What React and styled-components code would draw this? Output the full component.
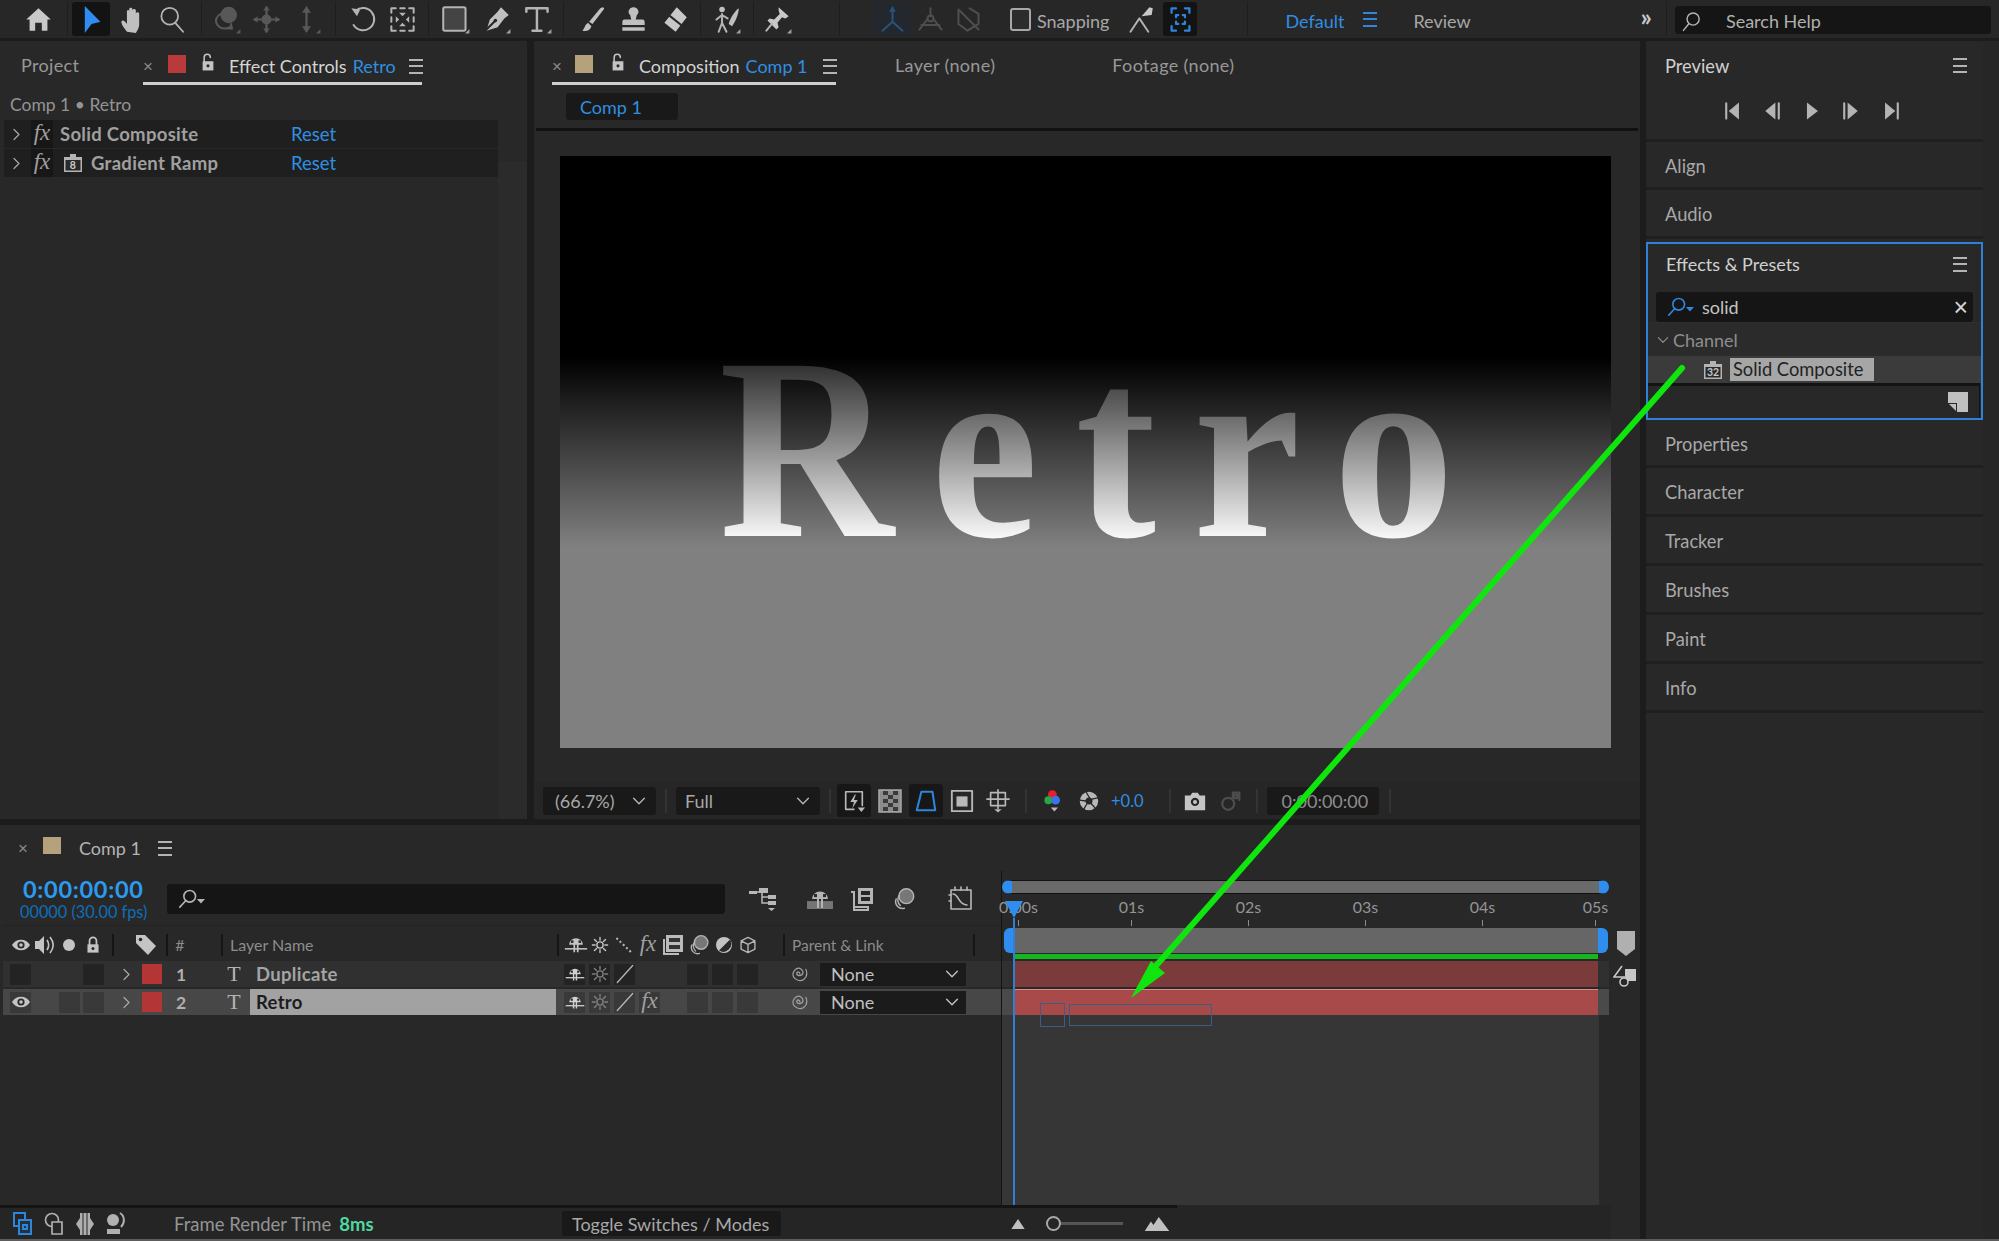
import React from 'react';
import styled, { createGlobalStyle } from 'styled-components';

const Global = createGlobalStyle`
  html, body { margin: 0; padding: 0; background: #1c1c1c; }
  body { font-family: Lato, "Open Sans", sans-serif; font-size: 18px; color: #a8a8a8; overflow: hidden; }
`;

const Page = styled.div`
  position: relative; width: 1999px; height: 1241px; overflow: hidden; box-sizing: border-box;
  display: flex; flex-direction: column; background: #1c1c1c; border-bottom: 2px solid #5c5c5c;
`;

/* ---------- icon helper ---------- */
const Ico = ({ size = 26, color = '#b4b4b4', sw = 1.8, children, vb = '0 0 26 26' }) => (
  <svg width={size} height={size} viewBox={vb} fill="none" stroke={color} strokeWidth={sw} strokeLinecap="round" strokeLinejoin="round">
    {children}
  </svg>
);
const Corner = ({ c = '#a0a0a0' }) => <path d="M25.500 21.500v4h-4z" fill={c} stroke="none" />;

const I = {
  home: <Ico><path d="M2 13 13 3l11 10h-3v10h-5v-7h-6v7H5V13z" fill="#c8c8c8" stroke="none" /></Ico>,
  select: <Ico color="#2f8df0"><path d="M7 1l14 14-8 2-6 8z" fill="#2f8df0" stroke="none" /></Ico>,
  hand: <Ico><path d="M8 24c-2-3-5-6-5-9 1-2 3-1 5 2V6c0-2 2-2 2 0v6-8c0-2 3-2 3 0v8-7c0-2 3-2 3 0v8-5c0-2 3-2 3 0v8c0 5-1 6-3 9z" fill="#c0c0c0" stroke="none" /></Ico>,
  zoom: <Ico sw={1.6}><circle cx="10.500" cy="10" r="7.500" /><path d="M15.500 16l7 8" /></Ico>,
  orbit: <Ico color="#585858"><circle cx="15" cy="9" r="6.500" fill="#585858" /><path d="M8 8c-4 2-6 6-3 10s9 4 12 1" /><path d="M17 17l1 4-4 0" /><Corner c="#585858" /></Ico>,
  pan: <Ico color="#585858" sw={2}><path d="M13 2v22M2 13h22" /><path d="M13 1l-3 4h6zM13 25l-3-4h6zM1 13l4-3v6zM25 13l-4-3v6z" fill="#585858" stroke="none" /><circle cx="13" cy="13" r="3.500" fill="#585858" /></Ico>,
  dolly: <Ico color="#585858" sw={2}><path d="M13 3v20" /><path d="M13 1l-4 6h8zM13 25l-4-6h8z" fill="#585858" stroke="none" /><Corner c="#585858" /></Ico>,
  rotate: <Ico sw={1.8}><path d="M7 5a10 10 0 1 1-2 13" /><path d="M3 3l5 7 3-6z" fill="#b4b4b4" stroke="none" /></Ico>,
  anchor: <Ico sw={1.800}><path d="M3 7V3h4M19 3h4v4M3 19v4h4M23 19v4h-4" /><path d="M11 3h4M11 23h4M3 11v4M23 11v4" /><path d="M10 7h6l-3 3zM10 19h6l-3-3zM7 10v6l3-3zM19 10v6l-3-3z" fill="#b4b4b4" stroke="none" /></Ico>,
  rect: <Ico sw={1.800}><rect x="2" y="2" width="20" height="21" rx="1.500" fill="#444" /><Corner /></Ico>,
  pen: <Ico sw={1.800}><path d="M17 2l7 7-4 3-6 8-10 3 3-10 7-7z" fill="#c0c0c0" stroke="none" /><path d="M4 22l7-7" stroke="#272727" /><circle cx="12" cy="14" r="1.600" fill="#272727" stroke="none" /><Corner /></Ico>,
  type: <Ico sw={2.200}><path d="M3 6V3h19v3M12.500 3v20M8.500 23h8" /><Corner /></Ico>,
  brush: <Ico><path d="M22 2c1 0 2 1 1 2L13 17l-3-2L20 3zM9 16l3 3c-1 4-5 5-8 4 2-2 2-5 5-7z" fill="#c0c0c0" stroke="none" /></Ico>,
  stamp: <Ico><path d="M13 2a4 4 0 0 1 3 7l-1 4h6a2 2 0 0 1 2 2v3H3v-3a2 2 0 0 1 2-2h6l-1-4a4 4 0 0 1 3-7zM3 20h20v3H3z" fill="#c0c0c0" stroke="none" /></Ico>,
  eraser: <Ico><path d="M15 2l9 9-10 13-10-8z" fill="#c8c8c8" stroke="none" /><path d="M9 10l10 8" stroke="#272727" /></Ico>,
  roto: <Ico><circle cx="9" cy="4" r="2.500" fill="#c0c0c0" stroke="none" /><path d="M9 8v8l-3 8M9 16l4 8M4 13l5-4 5 3" /><path d="M24 3c-3 2-8 9-9 14l3 2c3-4 6-11 6-16z" fill="#c0c0c0" stroke="none" /><Corner /></Ico>,
  pin: <Ico><path d="M14 2l9 8-3 2-3-1-4 5 1 4-2 2-8-8 2-2 4 1 5-5-1-3z" fill="#c8c8c8" stroke="none" /><path d="M8 17l-5 6" /><Corner /></Ico>,
  axisA: <Ico color="#28537c"><path d="M13 3v12M13 15l-9 8M13 15l9 8" /><path d="M13 1l-3 5h6z" fill="#28537c" stroke="none" /></Ico>,
  axisB: <Ico color="#4e4e4e"><path d="M13 3v7M10 13l-7 9M16 13l7 9M5 18h16" /><circle cx="13" cy="12" r="2.600" /></Ico>,
  axisC: <Ico color="#4e4e4e"><path d="M4 4l18 18M4 4v13l8 6 10-6V8L14 3" /></Ico>,
  snap: <Ico sw={1.700}><path d="M4 24l8-12 8 12" /><path d="M14 10l7-8 3 1-1 6z" fill="#c8c8c8" stroke="none" /></Ico>,
  snapBox: <Ico color="#2d86dc" sw={2}><path d="M5 7V3h4M17 3h4v4M5 19v4h4M21 19v4h-4M11 9H9v2M15 9h2v2M11 17H9v-2M15 17h2v-2" /></Ico>,
  search: (c = '#b4b4b4', s = 22) => (
    <Ico size={s} color={c} sw={1.800}>
      <circle cx="15" cy="10" r="7.500" /><path d="M9.500 16L3 24" />
    </Ico>
  ),
  searchCaret: (c = '#b4b4b4') => (
    <svg width="27" height="20" viewBox="0 0 30 22" fill="none" stroke={c} strokeWidth="1.800" strokeLinecap="round">
      <circle cx="13" cy="8" r="6.500" /><path d="M8.500 13L2 20" />
      <path d="M21 11h9l-4.500 5z" fill={c} stroke="none" />
    </svg>
  ),
  first: <Ico size={22}><path d="M5 4v18" strokeWidth="2.500" /><path d="M20 3v20L8 13z" fill="#b4b4b4" stroke="none" /></Ico>,
  prev: <Ico size={22}><path d="M21 4v18" strokeWidth="2.500" /><path d="M17 3v20L5 13z" fill="#b4b4b4" stroke="none" /></Ico>,
  play: <Ico size={22}><path d="M7 3v20l13-10z" fill="#b4b4b4" stroke="none" /></Ico>,
  next: <Ico size={22}><path d="M5 4v18" strokeWidth="2.500" /><path d="M9 3v20l12-10z" fill="#b4b4b4" stroke="none" /></Ico>,
  last: <Ico size={22}><path d="M21 4v18" strokeWidth="2.500" /><path d="M6 3v20l12-10z" fill="#b4b4b4" stroke="none" /></Ico>,
  lock: (s = 22) => <Ico size={s} color="#c4c4c4" sw={2}><path d="M8 12V7a4 4 0 0 1 8 0" /><path d="M6 12h14v12H6z" fill="#c4c4c4" stroke="none" /><circle cx="13" cy="18" r="2" fill="#272727" stroke="none" /></Ico>,
  lockShut: <Ico size={18} color="#c4c4c4" sw={2.600}><path d="M8 12V7a5 5 0 0 1 10 0v5" /><path d="M5 12h16v12H5z" fill="#c4c4c4" stroke="none" /><circle cx="13" cy="18" r="2.200" fill="#272727" stroke="none" /></Ico>,
  bolt: <Ico color="#b8b8b8" sw={1.800}><path d="M22 18V3H4v19h9" /><path d="M14 6l-5 8h4l-2 7 6-9h-4l2-6z" fill="#b8b8b8" stroke="none" /><path d="M17 20h8l-4 5z" fill="#b8b8b8" stroke="none" /></Ico>,
  checker: <svg width="24" height="24" viewBox="0 0 24 24"><rect x="1" y="1" width="22" height="22" fill="#8c8c8c" stroke="#a8a8a8" strokeWidth="1.500" /><path d="M5 2h5v4H5zM15 2h5v4h-5zM10 6h5v4h-5zM5 10h5v4H5zM15 10h5v4h-5zM10 14h5v4h-5zM5 18h5v4H5zM15 18h5v4h-5z" fill="#3a3a3a" /></svg>,
  region: <Ico color="#2d86dc" sw={2.200}><path d="M8 3h12l3 20H3z" /></Ico>,
  mask: <Ico color="#b8b8b8" sw={2}><rect x="2" y="2" width="22" height="22" /><rect x="7" y="8" width="12" height="11" fill="#b8b8b8" stroke="none" /></Ico>,
  grid: <Ico color="#b8b8b8" sw={1.800}><path d="M5 4h16v14H5zM13 1v20M1 11h24" /><path d="M9 22h8l-4 3.500z" fill="#b8b8b8" stroke="none" /></Ico>,
  rgb: (
    <svg width="26" height="30" viewBox="0 0 26 30">
      <circle cx="13" cy="7" r="5.500" fill="#e8202a" /><circle cx="8" cy="14" r="5" fill="#27a845" /><circle cx="17" cy="14" r="5.500" fill="#3b74e8" />
      <path d="M11 23h9l-4.500 5z" fill="#b8b8b8" />
    </svg>
  ),
  shutter: (
    <Ico color="#b8b8b8" sw={2.400}>
      <circle cx="13" cy="13" r="10" fill="#b8b8b8" stroke="none" />
      <circle cx="13" cy="13" r="3.800" fill="#272727" stroke="none" />
      <path d="M10 3.500l3.500 6M22.500 9.500l-6.500 1.500M20 21l-4.500-5M7.500 21.500l3-5M3 12l6.500 1" stroke="#272727" strokeWidth="1.400" />
    </Ico>
  ),
  camera: <Ico color="#c4c4c4"><path d="M2 7h6l2-3h6l2 3h6v16H2z" fill="#c4c4c4" stroke="none" /><circle cx="13" cy="14" r="4.500" fill="#272727" stroke="none" /><circle cx="13" cy="14" r="2.200" fill="#c4c4c4" stroke="none" /></Ico>,
  snapshot: <Ico color="#4e4e4e" sw={2.400}><circle cx="10" cy="16" r="6.500" /><path d="M15 4h7v8M15 4v5" /><circle cx="18" cy="8" r="2" /></Ico>,
  tree: <svg width="30" height="26" viewBox="0 0 30 26" fill="#b8b8b8"><path d="M1 5h8v3H1zM11 2h9v5h-9zM20 9h8v4h-8zM20 15h8v4h-8z" /><path d="M8 6h8M14 6v11h7M14 11h7" stroke="#b8b8b8" strokeWidth="1.500" fill="none" /><path d="M20 22h7l-3.500 3z" /></svg>,
  shy: (c = '#c0c0c0', w = 28, base = true) => (
    <svg width={w} height={w * 0.72} viewBox="0 0 28 20" fill={c}>
      <path d="M6 10a8 7.500 0 0 1 16 0z" /><path d="M11 9h2v10h-2zM15 9h2v10h-2z" />
      <rect x="8" y="5" width="3" height="3" fill="#2a2a2a" /><rect x="17" y="5" width="3" height="3" fill="#2a2a2a" />
      {base ? <rect x="1" y="14" width="26" height="1.800" /> : <rect x="1" y="12" width="26" height="8" opacity=".55" />}
    </svg>
  ),
  frames: <svg width="24" height="24" viewBox="0 0 24 24" fill="#b4b4b4"><path d="M8 1h15v16H8z" /><path d="M1 5h3v18h14v-3H4" fill="none" stroke="#b4b4b4" strokeWidth="2" /><path d="M11 4h9v4h-9zM11 10h9v4h-9z" fill="#272727" /></svg>,
  blur: (s = 24) => <Ico size={s} color="#b4b4b4" sw={1.600}><circle cx="15.500" cy="10" r="8" fill="#777" /><path d="M8 9a8 8 0 0 0 1 11M4.500 13a7.500 7.500 0 0 0 9 10" /></Ico>,
  graph: <Ico color="#b8b8b8" sw={1.600}><rect x="3" y="4" width="20" height="19" /><path d="M5 8c6 0 5 11 14 11" /><path d="M7 1v3M13 1v3M19 1v3M1 9h2M1 15h2" /></Ico>,
  eye: (c = '#c4c4c4') => <svg width="20" height="14" viewBox="0 0 20 14"><path d="M1 7c4-7 14-7 18 0-4 7-14 7-18 0z" fill={c} /><circle cx="10" cy="7" r="3.600" fill="#2a2a2a" /><circle cx="10" cy="7" r="1.800" fill={c} /></svg>,
  speaker: <svg width="22" height="20" viewBox="0 0 22 20" fill="#c4c4c4"><path d="M1 6h4l5-5v18l-5-5H1z" /><path d="M13 5c2 3 2 7 0 10M16 2c4 5 4 11 0 16" fill="none" stroke="#c4c4c4" strokeWidth="1.600" /></svg>,
  tag: <svg width="22" height="22" viewBox="0 0 22 22"><path d="M1 1h9l11 11-8 9L1 9z" fill="#c4c4c4" /><circle cx="5.500" cy="5.500" r="1.800" fill="#272727" /></svg>,
  dot: <svg width="12" height="12" viewBox="0 0 12 12"><circle cx="6" cy="6" r="6" fill="#c4c4c4" /></svg>,
  sun: (c = '#c4c4c4') => <Ico size={18} color={c} sw={2}><circle cx="13" cy="13" r="4.500" /><path d="M13 2v4M13 20v4M2 13h4M20 13h4M5 5l3 3M18 18l3 3M21 5l-3 3M8 18l-3 3" /></Ico>,
  dots: <Ico size={18} sw={3}><path d="M2 3l22 21" strokeDasharray="3 3.500" strokeLinecap="butt" /></Ico>,
  slash: <Ico size={20} color="#b4b4b4" sw={1.800}><path d="M3 24L23 2" /></Ico>,
  film: <svg width="20" height="20" viewBox="0 0 20 20" fill="#bbb"><rect x="3" y="0" width="17" height="17" /><path d="M0 4h2v14h14v2H0z" /><rect x="6" y="3" width="11" height="4" fill="#333" /><rect x="6" y="10" width="11" height="4" fill="#333" /></svg>,
  adj: <svg width="18" height="18" viewBox="0 0 18 18"><circle cx="9" cy="9" r="8" fill="#c4c4c4" /><path d="M15 3.500a8 8 0 0 1-11 11z" fill="#2a2a2a" /></svg>,
  cube: <Ico size={18} sw={2}><path d="M13 2l10 5v12l-10 5-10-5V7zM3 7l10 5 10-5M13 12v12" /></Ico>,
  spiral: <Ico size={20} color="#a0a0a0" sw={1.600}><path d="M14 13a2 2 0 1 0-4-1c0 4 7 4 8 0s-4-8-8-6-6 7-4 11 9 6 13 3 5-8 3-13" /></Ico>,
  chevD: (c = '#b4b4b4', s = 14) => <Ico size={s} color={c} sw={2.600}><path d="M3 8l10 10L23 8" /></Ico>,
  chevR: (c = '#a8a8a8') => <Ico size={13} color={c} sw={2.400}><path d="M8 3l10 10L8 23" /></Ico>,
  badge: (label, w = 20) => (
    <svg width={w} height={w} viewBox="0 0 20 20" fontFamily="Lato, sans-serif">
      <path d="M1 4h6V1h6v3h6v15H1z" fill="#b4b4b4" />
      <rect x="2.500" y="7" width="15" height="10.500" fill="#2a2a2a" />
      <text x="10" y="16" textAnchor="middle" fontSize="10.500" fontWeight="700" fill="#c8c8c8">{label}</text>
    </svg>
  ),
  newPreset: <svg width="20" height="20" viewBox="0 0 20 20"><path d="M0 0h20v20H9v-9H0z" fill="#c0c0c0" /><path d="M1 12h7v7z" fill="#c0c0c0" /></svg>,
  comps: <svg width="20" height="24" viewBox="0 0 20 24" fill="none" stroke="#2d86dc" strokeWidth="2"><rect x="1" y="1" width="11" height="13" /><rect x="6" y="8" width="12" height="14" fill="#26303a" /><rect x="10" y="13" width="4" height="4" /></svg>,
  stack: <svg width="20" height="24" viewBox="0 0 20 24" fill="none" stroke="#b0b0b0" strokeWidth="1.700"><circle cx="8" cy="8" r="6.500" /><path d="M8 10h10v12H8z" fill="#272727" /></svg>,
  hourglass: <svg width="18" height="24" viewBox="0 0 18 24" fill="#b0b0b0"><path d="M4 1h10v5l4 6-4 6v5H4v-5l-4-6 4-6z" /><path d="M7 1v22M11 1v22" stroke="#272727" strokeWidth="1" /></svg>,
  user: <svg width="24" height="24" viewBox="0 0 24 24" fill="#b0b0b0"><circle cx="9" cy="8" r="6" /><path d="M3 17h13v5H3z" /><path d="M16 1c5 3 5 10 1 14" stroke="#b0b0b0" fill="none" strokeWidth="2" /></svg>,
  mountS: <svg width="14" height="10" viewBox="0 0 16 12" fill="#c0c0c0"><path d="M0 12l8-12 8 12z" /></svg>,
  mountL: <svg width="28" height="14" viewBox="0 0 28 16" fill="#c0c0c0"><path d="M0 16L7 5l3 4L16 0l12 16z" /></svg>,
  marker: <svg width="18" height="26" viewBox="0 0 18 26"><path d="M0 0h18v18l-9 7-9-7z" fill="#b0b0b0" /></svg>,
  compMark: <svg width="24" height="22" viewBox="0 0 24 22" fill="none" stroke="#c8c8c8" strokeWidth="1.600"><path d="M9 1L1 12h12" /><circle cx="11" cy="17" r="4" /><path d="M12 4h11v12h-8l-3-5z" fill="#c8c8c8" stroke="none" /></svg>,
};

/* ---------- top bar ---------- */
const TopBar = styled.header`
  height: 38px; flex: none; background: #272727; display: flex; align-items: stretch; padding-left: 18px;
`;
const Tool = styled.div`
  width: ${p => p.$w || 40}px; margin-left: ${p => p.$ml || 0}px; flex: none;
  display: flex; align-items: center; justify-content: center;
  background: ${p => p.$bg || 'transparent'};
  border-radius: 3px; margin-top: ${p => (p.$bg ? 2 : 0)}px; margin-bottom: ${p => (p.$bg ? 2 : 0)}px;
  svg { width: 29px; height: 29px; }
`;
const VSep = styled.div`
  width: 1px; flex: none; margin-left: ${p => p.$ml || 0}px; background: #1e1e1e; margin-top: 2px; margin-bottom: 2px;
`;
const CheckBox = styled.div`
  width: 17px; height: 19px; flex: none; border: 2px solid #a8a8a8; border-radius: 3px; margin: auto 0 auto ${p => p.$ml}px; background: #2c2c2c;
`;
const BarText = styled.span`
  align-self: center; margin-left: ${p => p.$ml || 0}px; flex: none; padding-top: 3px;
  color: ${p => p.$c || '#a8a8a8'}; font-size: 18px;
`;
const Burger = styled.div`
  flex: none; align-self: center; width: ${p => p.$w || 14}px; height: 11px; margin-left: ${p => p.$ml || 0}px;
  border-top: 2px solid ${p => p.$c || '#b4b4b4'}; border-bottom: 2px solid ${p => p.$c || '#b4b4b4'};
  position: relative;
  &::after { content: ''; position: absolute; left: 0; right: 0; top: 4.500px; height: 2px; background: ${p => p.$c || '#b4b4b4'}; }
`;
const Chevrons = styled.span`
  align-self: center; margin-left: ${p => p.$ml}px; color: #c8c8c8; font-size: 25px; font-weight: 700; line-height: 1; margin-top: -6px;
`;
const HelpBox = styled.div`
  flex: none; width: 316px; margin: 6px 0 4px 8px; padding-top: 2px; box-sizing: border-box; background: #151515; border-radius: 3px;
  display: flex; align-items: center; padding-left: 6px; gap: 24px; color: #b0b0b0; font-size: 18px;
`;

/* ---------- main ---------- */
const Main = styled.div`
  flex: 1; display: flex; min-height: 0; padding-top: 3px; gap: 6px; background: #1c1c1c;
`;
const LeftStack = styled.div`
  width: 1640px; flex: none; display: flex; flex-direction: column; gap: 6px; min-height: 0;
`;
const UpperRow = styled.div`
  height: 778px; flex: none; display: flex; gap: 7px;
`;
const Panel = styled.section`
  background: #282828; display: flex; flex-direction: column; min-width: 0;
`;
const EffectPanel = styled(Panel)`
  width: 527px; flex: none; position: relative;
`;
const CompPanel = styled(Panel)`
  flex: 1;
`;
const Tabs = styled.div`
  height: 44px; flex: none; display: flex; align-items: stretch; padding-left: ${p => p.$pl || 0}px;
`;
const Tab = styled.div`
  display: flex; align-items: center; height: 44px; box-sizing: border-box; margin-left: ${p => p.$ml || 0}px;
  width: ${p => (p.$w ? `${p.$w}px` : 'auto')}; white-space: nowrap;
  border-bottom: 3px solid ${p => (p.$on ? '#cfcfcf' : 'transparent')};
  color: ${p => (p.$on ? '#d4d4d4' : '#989898')}; font-size: 18px; padding-top: ${p => (p.$on ? 9 : 6)}px;
  letter-spacing: ${p => (p.$on ? 0 : 0.35)}px;
  span { flex: none; }
`;
const Close = styled.span`
  color: #8a8a8a; font-size: 17px; line-height: 1; margin-left: ${p => p.$ml || 0}px; margin-right: ${p => p.$mr || 0}px; font-family: "Liberation Sans", sans-serif;
`;
const Swatch = styled.span`
  width: ${p => p.$s || 18}px; height: ${p => p.$h || 18}px; flex: none; background: ${p => p.$c};
  margin-left: ${p => p.$ml || 0}px; margin-right: ${p => p.$mr || 0}px; margin-bottom: ${p => p.$mb || 0}px;
`;
const Blue = styled.span`
  color: #2f8fe0; margin-left: ${p => p.$ml ?? 6}px;
`;
const LockWrap = styled.span`
  display: inline-flex; margin: 0 ${p => p.$mr || 11}px 8px ${p => p.$ml || 12}px;
`;
const Crumb = styled.div`
  height: 35px; flex: none; box-sizing: border-box; padding: 4px 0 0 10px; display: flex; align-items: center; color: #949494; font-size: 17.500px;
`;
const FxRow = styled.div`
  width: 494px; height: 28px; margin: 0 0 1px 4px; background: #1f1f1f; display: flex; align-items: center; color: #a0a0a0; font-size: 18.500px; font-weight: 700; letter-spacing: .3px; flex: none;
`;
const FxMark = styled.span`
  font-family: "Liberation Serif", serif; font-style: italic; font-weight: 400; font-size: 23px; color: #a0a0a0; letter-spacing: 0;
  width: 22px; background: ${p => (p.$bare ? 'none' : '#171717')}; text-align: center; height: 28px; line-height: 26px; flex: none;
  margin-left: ${p => p.$ml || 0}px; margin-right: ${p => (p.$bare ? 0 : 7)}px;
`;
const ResetLink = styled.span`
  position: absolute; left: ${p => p.$x}px; color: #2f8fe0; font-weight: 400; letter-spacing: 0;
`;
const RowChev = styled.span`
  margin-left: ${p => p.$ml || 6}px; display: inline-flex; flex: none;
`;
const RampName = styled.span`
  margin-left: 8px;
`;
const ScrollCol = styled.div`
  position: absolute; right: 0; top: 120px; bottom: 0; width: 29px; background: #2b2b2b;
`;

const ChipRow = styled.div`
  height: 43px; flex: none; border-bottom: 3px solid #111; margin: 0 2px; display: flex; align-items: center; padding-left: 30px;
`;
const Chip = styled.div`
  width: ${p => p.$w}px; height: ${p => p.$h || 27}px; box-sizing: border-box; background: #191919; border-radius: 3px; flex: none;
  display: flex; align-items: center; padding: 0 ${p => p.$pr ?? 10}px 0 ${p => p.$pl ?? 14}px; justify-content: space-between;
  margin-left: ${p => p.$ml || 0}px; color: ${p => p.$c || '#a8a8a8'}; font-size: 18px; white-space: nowrap;
`;
const Viewer = styled.div`
  flex: 1; min-height: 0; display: flex; padding: 25px 29px 34px 26px; box-sizing: border-box;
`;
const Canvas = styled.div`
  flex: 1; background: linear-gradient(180deg, #000 0, #000 34%, #808080 66%, #808080 100%);
  display: flex; justify-content: center; padding-top: 142px; box-sizing: border-box; overflow: hidden;
`;
const RetroText = styled.div`
  font-family: "Liberation Serif", serif; font-weight: 700; font-size: 260px; line-height: 300px; height: 300px;
  letter-spacing: 40px; margin-left: 40px; flex: none;
  background: linear-gradient(180deg, transparent 0, transparent 20%, #2c2c2c 21%, #f8f8f8 80%, #fff 100%);
  -webkit-background-clip: text; background-clip: text; color: transparent; transform: scaleX(.93);
`;
const ViewerFoot = styled.div`
  height: 37px; flex: none; display: flex; align-items: center; background: #262626; padding-left: 9px;
`;
const FootSep = styled.div`
  width: 2px; height: 24px; flex: none; background: #333; margin-left: ${p => p.$ml || 0}px;
`;
const FootIcon = styled.div`
  width: ${p => p.$w || 34}px; height: 33px; flex: none; display: flex; align-items: center; justify-content: center;
  margin-left: ${p => p.$ml || 0}px; border-radius: 3px; background: ${p => (p.$on ? '#171717' : 'transparent')};
  svg { height: 24px; width: auto; }
`;
const ExposureValue = styled.span`
  color: #2f8fe0; font-size: 16.500px; margin-left: 5px; flex: none;
`;

/* ---------- timeline ---------- */
const Timeline = styled(Panel)`
  flex: 1; min-height: 0;
`;
const TlTabs = styled.div`
  height: 46px; flex: none; display: flex; align-items: center; padding-left: 18px; color: #b4b4b4; font-size: 18px;
`;
const TlName = styled.span`
  margin-left: 18px;
`;
const TlBody = styled.div`
  flex: 1; min-height: 0; display: flex;
`;
const TlLeft = styled.div`
  width: 1001px; flex: none; display: flex; flex-direction: column;
`;
const TimeRow = styled.div`
  height: 54px; flex: none; display: flex; padding-left: 20px;
`;
const TimeCol = styled.div`
  width: 147px; flex: none; display: flex; flex-direction: column; padding-top: 5px;
`;
const TimeCode = styled.div`
  color: #2b9bf0; font-size: 23.500px; font-weight: 700; line-height: 27px; letter-spacing: .7px; margin-left: 3px;
`;
const TimeSub = styled.div`
  color: #0f6fb8; font-size: 16.300px; line-height: 18px; white-space: nowrap;
`;
const LayerSearch = styled.div`
  width: 558px; height: 30px; margin-top: 13px; background: #151515; border-radius: 3px; display: flex; align-items: center; padding-left: 11px; flex: none; box-sizing: border-box;
`;
const TlTool = styled.div`
  width: 40px; margin-left: ${p => p.$ml || 0}px; height: 30px; margin-top: 13px; display: flex; align-items: center; justify-content: center; flex: none;
`;
const HeadRow = styled.div`
  height: 35px; flex: none; display: flex; align-items: center; margin-left: 3px; padding-top: 3px; border-top: 1px solid #222; box-sizing: border-box; color: #8c8c8c; font-size: 16px;
`;
const HeadTitle = styled.span`
  margin-left: 7px; width: ${p => p.$w}px; flex: none; font-size: ${p => p.$fs || 16}px;
`;
const Cell = styled.div`
  width: ${p => p.$w || 24}px; flex: none; margin-left: ${p => p.$ml || 0}px; display: flex; align-items: center; justify-content: center;
`;
const HeadSep = styled.div`
  width: 2px; height: 22px; flex: none; background: #151515; margin-left: ${p => p.$ml || 0}px;
`;
const LayerRow = styled.div`
  height: 26px; margin: ${p => (p.$sel ? '2px' : '1px')} 0 0 3px; display: flex; align-items: center; flex: none;
  background: ${p => (p.$sel ? '#474747' : '#303030')}; color: #b0b0b0; font-size: 18px;
`;
const SwitchBox = styled.div`
  width: 21px; height: 21px; flex: none; margin-left: ${p => p.$ml ?? 4}px; display: flex; align-items: center; justify-content: center;
  background: ${p => (p.$sel ? '#393939' : '#232323')};
`;
const Gap = styled.span`
  width: ${p => p.$w}px; flex: none;
`;
const Label = styled.span`
  width: 20px; height: 20px; flex: none; background: #b33535; margin-left: ${p => p.$ml}px;
`;
const Num = styled.span`
  width: 22px; flex: none; margin-left: ${p => p.$ml}px; font-weight: 700; font-size: 17.500px; text-align: center;
`;
const TypeT = styled.span`
  font-family: "Liberation Serif", serif; font-size: 22px; font-weight: 400; color: #b4b4b4; width: 18px; flex: none; margin-left: ${p => p.$ml}px; text-align: center;
`;
const NameCell = styled.div`
  height: 26px; flex: none; width: ${p => p.$w}px; margin-left: ${p => p.$ml}px; padding-left: 6px; box-sizing: border-box; display: flex; align-items: center; font-weight: 700; font-size: 18.500px; letter-spacing: .3px;
  background: ${p => (p.$sel ? '#a2a2a2' : 'transparent')}; color: ${p => (p.$sel ? '#1c1c1c' : '#a4a4a4')};
`;
const NoneSel = styled.div`
  width: 146px; height: 23px; flex: none; margin-left: 9px; background: #1b1b1b; display: flex; align-items: center; justify-content: space-between; padding: 0 7px 0 11px; box-sizing: border-box; color: #c0c0c0;
`;
const TlRight = styled.div`
  flex: 1; min-width: 0; display: flex; flex-direction: column; position: relative; border-left: 1px solid #141414;
`;
const NavStrip = styled.div`
  height: 14px; margin: 9px 31px 0 0; background: #6a6a6a; border-top: 1px solid #111; border-bottom: 1px solid #111; box-sizing: border-box; border-radius: 7px; flex: none; position: relative;
  border-left: 10px solid #2f8df0; border-right: 10px solid #2f8df0;
`;
const Ruler = styled.div`
  height: 34px; flex: none; margin-right: 31px; padding: 4px 0 0 0; box-sizing: border-box; position: relative; display: flex; color: #949494; font-size: 16px;
`;
const RulerMark = styled.div`
  width: 117px; flex: none; text-align: center; display: flex; flex-direction: column; align-items: center; line-height: 18px;
  margin-left: ${p => p.$ml || 0}px;
  &::after { content: ''; width: 1px; height: 6px; background: #8c8c8c; margin-top: 4px; }
`;
const WorkBar = styled.div`
  height: 25px; flex: none; margin: 0 32px 0 2px; background: #666; border-left: 10px solid #2f8df0; border-right: 10px solid #2f8df0; border-radius: 6px; box-sizing: border-box;
`;
const GreenLine = styled.div`
  height: 5px; flex: none; margin: 1px 42px 0 12px; background: #12b81e;
`;
const TrackRow = styled.div`
  height: 26px; margin-top: 2px; flex: none; width: 607px; box-sizing: border-box; padding: 0 11px 0 12px;
  background: ${p => (p.$sel ? '#4a4a4a' : '#303030')}; display: flex;
`;
const TrackBar = styled.div`
  flex: 1; background: ${p => (p.$sel ? '#a94a4a' : '#7b3b3b')}; border-top: ${p => (p.$sel ? '1px solid #d68b8b' : 'none')};
`;
const GraphFill = styled.div`
  flex: 1; width: 597px; background: #363636; min-height: 0;
`;
const GhostBox = styled.div`
  position: absolute; top: ${p => p.$y}px; left: ${p => p.$x}px; width: ${p => p.$w}px; height: ${p => p.$h}px; border: 1.500px solid #3d5e80; box-sizing: border-box;
`;
const Playhead = styled.div`
  position: absolute; left: 2px; top: 30px; bottom: 0; width: 20px; display: flex; flex-direction: column; align-items: center; pointer-events: none;
  &::before { content: ''; width: 0; height: 0; border-left: 9px solid transparent; border-right: 9px solid transparent; border-top: 17px solid #2f8df0; }
  &::after { content: ''; flex: 1; width: 1.500px; background: #2f7fd6; }
`;
const SideMark = styled.div`
  position: absolute; left: ${p => p.$x}px; top: ${p => p.$y}px; display: flex;
`;
const StatusBar = styled.footer`
  height: 34px; flex: none; width: 1611px; box-sizing: border-box; background: #252525; display: flex; align-items: center; position: relative; padding-top: 3px;
  color: #949494; font-size: 18.500px;
  &::before { content: ''; position: absolute; left: 0; top: 0; width: 1177px; height: 3px; background: #141414; }
`;
const StatusIcon = styled.div`
  width: 31px; flex: none; display: flex; justify-content: center; margin-left: ${p => p.$ml || 0}px;
`;
const RenderInfo = styled.div`
  width: 388px; margin-left: 43px; flex: none; white-space: nowrap;
`;
const SlideTrack = styled.div`
  width: 62px; height: 3px; flex: none; background: #555;
`;
const Knob = styled.span`
  width: 11px; height: 11px; flex: none; border: 2.500px solid #a8a8a8; border-radius: 50%; margin-left: 13px;
`;
const Teal = styled.span`
  color: #50d8a0; font-weight: 700; margin-left: 8px;
`;

/* ---------- right column ---------- */
const RightCol = styled.aside`
  width: 337px; flex: none; display: flex; flex-direction: column; background: #282828;
`;
const RightEdge = styled.div`
  flex: 1; margin-left: -6px; background: #262626;
`;
const PanelHead = styled.div`
  height: ${p => p.$h || 49}px; box-sizing: border-box; flex: none; display: flex; align-items: center; justify-content: space-between;
  padding: ${p => (p.$inBox ? '0 14px 8px 18px' : '2px 16px 0 19px')}; border-bottom: ${p => (p.$line ? '3px solid #1f1f1f' : 'none')};
  color: ${p => (p.$bright ? '#d0d0d0' : '#a8a8a8')}; font-size: ${p => (p.$inBox ? 18 : 18.3)}px;
`;
const Transport = styled.div`
  height: 54px; flex: none; display: flex; justify-content: center; gap: 17.500px; align-items: flex-start; padding: 12px 6px 0 0; border-bottom: 3px solid #1f1f1f; box-sizing: border-box;
`;
const EffectsBox = styled.div`
  height: 178px; margin-top: 3px; flex: none; border: 2px solid #2f80d8; box-sizing: border-box; display: flex; flex-direction: column;
`;
const EffSearch = styled.div`
  height: 30px; margin: 0 8px; flex: none; background: #151515; border-radius: 3px; display: flex; align-items: center; padding: 0 5px 0 11px; gap: 8px; color: #c4c4c4; font-size: 18px;
`;
const ClearX = styled.span`
  margin-left: auto; color: #d4d4d4; font-size: 25px; line-height: 1; font-family: "Liberation Sans", sans-serif;
`;
const ChannelRow = styled.div`
  height: 34px; flex: none; display: flex; align-items: center; padding-left: 9px; gap: 4px; color: #8e8e8e; font-size: 18px; border-top: 1px solid #2e2e2e; box-sizing: border-box; background: #2b2b2b;
`;
const SolidRow = styled.div`
  height: 27px; flex: none; background: #3b3b3b; display: flex; align-items: center; padding-left: 55px; gap: 7px;
`;
const SelChip = styled.span`
  background: #a6a6a6; color: #222; padding: 0 3px; height: 23px; line-height: 23px; font-size: 18.300px; width: 144px; box-sizing: border-box; white-space: nowrap;
`;
const PresetFoot = styled.div`
  flex: 1; border-top: 3px solid #131313; display: flex; justify-content: flex-end; align-items: center; padding-right: 11px; margin-right: 1px;
  border-right: 1px solid #131313;
`;

const Arrow = styled.svg`
  position: absolute; left: 0; top: 0; pointer-events: none;
`;

export default function App() {
  return (
    <Page>
      <Global />
      <TopBar>
        <Tool>{I.home}</Tool>
        <VSep $ml={9} />
        <Tool $ml={4} $w={38} $bg="#131313">{I.select}</Tool>
        <Tool $ml={2}>{I.hand}</Tool>
        <Tool>{I.zoom}</Tool>
        <VSep $ml={9} />
        <Tool $ml={4}>{I.orbit}</Tool>
        <Tool>{I.pan}</Tool>
        <Tool>{I.dolly}</Tool>
        <VSep $ml={9} />
        <Tool $ml={6}>{I.rotate}</Tool>
        <Tool>{I.anchor}</Tool>
        <VSep $ml={6} />
        <Tool $ml={6}>{I.rect}</Tool>
        <Tool $ml={1}>{I.pen}</Tool>
        <Tool $ml={1}>{I.type}</Tool>
        <VSep $ml={6} />
        <Tool $ml={8}>{I.brush}</Tool>
        <Tool $ml={1}>{I.stamp}</Tool>
        <Tool $ml={1}>{I.eraser}</Tool>
        <VSep $ml={6} />
        <Tool $ml={5}>{I.roto}</Tool>
        <VSep $ml={7} />
        <Tool $ml={3}>{I.pin}</Tool>
        <VSep $ml={42} />
        <Tool $ml={33} $w={38} $bg="#22282d">{I.axisA}</Tool>
        <Tool $w={38}>{I.axisB}</Tool>
        <Tool $w={38}>{I.axisC}</Tool>
        <CheckBox $ml={23} />
        <BarText $ml={6}>Snapping</BarText>
        <Tool $ml={11}>{I.snap}</Tool>
        <Tool $ml={3} $w={34} $bg="#131313">{I.snapBox}</Tool>
        <VSep $ml={50} />
        <BarText $ml={37} $c="#2f8fe0">Default</BarText>
        <Burger $ml={19} $c="#2f86dc" />
        <BarText $ml={36}>Review</BarText>
        <Chevrons $ml={170}>»</Chevrons>
        <VSep $ml={14} />
        <HelpBox>{I.search('#b4b4b4', 21)}Search Help</HelpBox>
      </TopBar>

      <Main>
        <LeftStack>
          <UpperRow>
            <EffectPanel>
              <ScrollCol />
              <Tabs $pl={21}>
                <Tab $w={122}>Project</Tab>
                <Tab $on $w={279}>
                  <Close $mr={15}>×</Close>
                  <Swatch $c="#b83a3a" $mb={5} />
                  <LockWrap>{I.lock(20)}</LockWrap>
                  <span>Effect Controls</span><Blue>Retro</Blue>
                  <Burger $ml={13} />
                </Tab>
              </Tabs>
              <Crumb>Comp 1 • Retro</Crumb>
              <FxRow>
                <RowChev>{I.chevR()}</RowChev>
                <FxMark $ml={8}>fx</FxMark>
                <span>Solid Composite</span>
                <ResetLink $x={291}>Reset</ResetLink>
              </FxRow>
              <FxRow>
                <RowChev>{I.chevR()}</RowChev>
                <FxMark $ml={8}>fx</FxMark>
                <RowChev $ml={3}>{I.badge('8', 20)}</RowChev>
                <RampName>Gradient Ramp</RampName>
                <ResetLink $x={291}>Reset</ResetLink>
              </FxRow>
            </EffectPanel>
            <CompPanel>
              <Tabs $pl={18}>
                <Tab $on $w={284}>
                  <Close $mr={13}>×</Close>
                  <Swatch $c="#b5a27c" $mb={5} />
                  <LockWrap $ml={15}>{I.lock(20)}</LockWrap>
                  <span>Composition</span><Blue>Comp 1</Blue>
                  <Burger $ml={15} />
                </Tab>
                <Tab $ml={59}>Layer (none)</Tab>
                <Tab $ml={117}>Footage (none)</Tab>
              </Tabs>
              <ChipRow>
                <Chip $w={112} $c="#2f8fe0">Comp 1</Chip>
              </ChipRow>
              <Viewer>
                <Canvas>
                  <RetroText>Retro</RetroText>
                </Canvas>
              </Viewer>
              <ViewerFoot>
                <Chip $w={113} $h={28} $pl={12}>(66.7%){I.chevD()}</Chip>
                <FootSep $ml={9} />
                <Chip $w={144} $h={28} $ml={9} $pl={9}>Full{I.chevD()}</Chip>
                <FootSep $ml={9} />
                <FootIcon $ml={6} $on>{I.bolt}</FootIcon>
                <FootIcon $ml={2}>{I.checker}</FootIcon>
                <FootIcon $ml={2} $on>{I.region}</FootIcon>
                <FootIcon $ml={2}>{I.mask}</FootIcon>
                <FootIcon $ml={2}>{I.grid}</FootIcon>
                <FootSep $ml={10} />
                <FootIcon $ml={8}>{I.rgb}</FootIcon>
                <FootIcon $ml={3}>{I.shutter}</FootIcon>
                <ExposureValue>+0.0</ExposureValue>
                <FootSep $ml={25} />
                <FootIcon $ml={7}>{I.camera}</FootIcon>
                <FootIcon $ml={2}>{I.snapshot}</FootIcon>
                <FootSep $ml={8} />
                <Chip $w={112} $h={28} $ml={9} $pl={15} $c="#8e8e8e">0:00:00:00</Chip>
                <FootSep $ml={10} />
              </ViewerFoot>
            </CompPanel>
          </UpperRow>

          <Timeline>
            <TlTabs>
              <Close $mr={15}>×</Close>
              <Swatch $c="#b5a27c" $h={17} $mb={5} />
              <TlName>Comp 1</TlName>
              <Burger $ml={17} />
            </TlTabs>
            <TlBody>
              <TlLeft>
                <TimeRow>
                  <TimeCol>
                    <TimeCode>0:00:00:00</TimeCode>
                    <TimeSub>00000 (30.00 fps)</TimeSub>
                  </TimeCol>
                  <LayerSearch>{I.searchCaret('#b4b4b4')}</LayerSearch>
                  <TlTool $ml={18}>{I.tree}</TlTool>
                  <TlTool $ml={17}>{I.shy('#b4b4b4', 28, false)}</TlTool>
                  <TlTool $ml={2}>{I.frames}</TlTool>
                  <TlTool $ml={2}>{I.blur()}</TlTool>
                  <TlTool $ml={17}>{I.graph}</TlTool>
                </TimeRow>
                <HeadRow>
                  <Cell $ml={6}>{I.eye()}</Cell>
                  <Cell>{I.speaker}</Cell>
                  <Cell>{I.dot}</Cell>
                  <Cell>{I.lockShut}</Cell>
                  <HeadSep $ml={7} />
                  <Cell $ml={20}>{I.tag}</Cell>
                  <HeadSep $ml={8} />
                  <Cell>#</Cell>
                  <HeadSep $ml={29} />
                  <HeadTitle $w={327}>Layer Name</HeadTitle>
                  <HeadSep />
                  <Cell $ml={5}>{I.shy('#c4c4c4', 24)}</Cell>
                  <Cell>{I.sun()}</Cell>
                  <Cell>{I.dots}</Cell>
                  <Cell><FxMark $bare>fx</FxMark></Cell>
                  <Cell $w={26}>{I.film}</Cell>
                  <Cell $w={26}>{I.blur(22)}</Cell>
                  <Cell>{I.adj}</Cell>
                  <Cell>{I.cube}</Cell>
                  <HeadSep $ml={23} />
                  <HeadTitle $w={181} $fs={15.500}>Parent &amp; Link</HeadTitle>
                  <HeadSep />
                </HeadRow>
                {[{ n: 1, name: 'Duplicate' }, { n: 2, name: 'Retro', sel: true }].map(({ n, name, sel }) => (
                  <LayerRow key={n} $sel={sel}>
                    {sel ? <SwitchBox $sel $ml={7}>{I.eye('#c4c4c4')}</SwitchBox> : <SwitchBox $ml={7} />}
                    {sel ? <SwitchBox $sel $ml={28} /> : <Gap $w={49} />}
                    <SwitchBox $sel={sel} $ml={3} />
                    <RowChev $ml={16}>{I.chevR()}</RowChev>
                    <Label $ml={9} />
                    <Num $ml={8}>{n}</Num>
                    <TypeT $ml={33}>T</TypeT>
                    <NameCell $sel={sel} $ml={7} $w={306}>{name}</NameCell>
                    <SwitchBox $sel={sel} $ml={8}>{I.shy('#d0d0d0', 20)}</SwitchBox>
                    <SwitchBox $sel={sel}>{I.sun('#808080')}</SwitchBox>
                    <SwitchBox $sel={sel}>{I.slash}</SwitchBox>
                    {sel
                      ? <SwitchBox $sel><FxMark $bare>fx</FxMark></SwitchBox>
                      : <Gap $w={25} />}
                    <SwitchBox $sel={sel} $ml={27} />
                    <SwitchBox $sel={sel} />
                    <SwitchBox $sel={sel} />
                    <Cell $ml={29}>{I.spiral}</Cell>
                    <NoneSel>None{I.chevD('#c0c0c0', 14)}</NoneSel>
                  </LayerRow>
                ))}
              </TlLeft>
              <TlRight>
                <NavStrip />
                <Ruler>
                  <RulerMark $ml={-42}>0:00s</RulerMark>
                  <RulerMark $ml={-4}>01s</RulerMark>
                  <RulerMark>02s</RulerMark>
                  <RulerMark>03s</RulerMark>
                  <RulerMark>04s</RulerMark>
                  <RulerMark $ml={-4}>05s</RulerMark>
                </Ruler>
                <WorkBar />
                <GreenLine />
                <TrackRow><TrackBar /></TrackRow>
                <TrackRow $sel><TrackBar $sel /></TrackRow>
                <GraphFill />
                <GhostBox $x={38} $y={132} $w={25} $h={24} />
                <GhostBox $x={67} $y={133} $w={143} $h={22} />
                <Playhead />
                <SideMark $x={615} $y={60}>{I.marker}</SideMark>
                <SideMark $x={611} $y={94}>{I.compMark}</SideMark>
              </TlRight>
            </TlBody>
            <StatusBar>
              <StatusIcon $ml={7}>{I.comps}</StatusIcon>
              <StatusIcon>{I.stack}</StatusIcon>
              <StatusIcon>{I.hourglass}</StatusIcon>
              <StatusIcon>{I.user}</StatusIcon>
              <RenderInfo>Frame Render Time<Teal>8ms</Teal></RenderInfo>
              <Chip $w={219} $h={25} $pl={10} $c="#a8a8a8">Toggle Switches / Modes</Chip>
              <StatusIcon $ml={221}>{I.mountS}</StatusIcon>
              <Knob />
              <SlideTrack />
              <StatusIcon $ml={18}>{I.mountL}</StatusIcon>
            </StatusBar>
          </Timeline>
        </LeftStack>

        <RightCol>
          <PanelHead $h={47} $bright>Preview<Burger /></PanelHead>
          <Transport>{I.first}{I.prev}{I.play}{I.next}{I.last}</Transport>
          <PanelHead $h={48} $line>Align</PanelHead>
          <PanelHead $line>Audio</PanelHead>
          <EffectsBox>
            <PanelHead $h={48} $bright $inBox>Effects &amp; Presets<Burger /></PanelHead>
            <EffSearch>{I.searchCaret('#2f86dc')}<span>solid</span><ClearX>×</ClearX></EffSearch>
            <ChannelRow>{I.chevD('#8e8e8e', 12)}Channel</ChannelRow>
            <SolidRow>{I.badge('32', 20)}<SelChip>Solid Composite</SelChip></SolidRow>
            <PresetFoot>{I.newPreset}</PresetFoot>
          </EffectsBox>
          <PanelHead $h={48} $line>Properties</PanelHead>
          <PanelHead $line>Character</PanelHead>
          <PanelHead $line>Tracker</PanelHead>
          <PanelHead $line>Brushes</PanelHead>
          <PanelHead $line>Paint</PanelHead>
          <PanelHead $line>Info</PanelHead>
        </RightCol>
        <RightEdge />
      </Main>

      <Arrow width="1999" height="1241" viewBox="0 0 1999 1241">
        <path d="M1682 368L1147 976" stroke="#0ee60e" strokeWidth="6" strokeLinecap="round" fill="none" />
        <path d="M1131 998l20-37 14 12z" fill="#0ee60e" />
      </Arrow>
    </Page>
  );
}
